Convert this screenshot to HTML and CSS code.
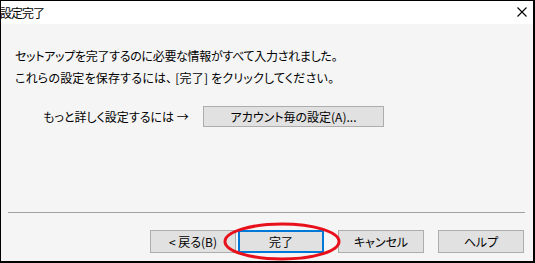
FILE: index.html
```html
<!DOCTYPE html>
<html lang="ja">
<head>
<meta charset="utf-8">
<link rel="stylesheet" href="styles.css">
</head>
<body>
<div class="window">
  <div class="titlebar">
    <span class="title">設定完了</span>
    <svg class="close" width="10" height="10" viewBox="0 0 10 10"><path d="M0.5 0.5 L9.5 9.5 M9.5 0.5 L0.5 9.5" stroke="#000" stroke-width="1.1" fill="none"/></svg>
  </div>
  <div class="body">
    <div class="content">
      <p class="line">セットアップを完了するのに必要な情報がすべて入力されました。</p>
      <p class="line line-wide">これらの設定を保存するには、 [完了] をクリックしてください。</p>
      <div class="detail-row">
        <span class="detail-label">もっと詳しく設定するには →</span>
        <button class="btn btn-wide">アカウント毎の設定(A)...</button>
      </div>
    </div>
    <hr class="sep">
    <div class="actions">
      <button class="btn">&lt; 戻る(B)</button>
      <button class="btn btn-default">完了</button>
      <button class="btn btn-gap">キャンセル</button>
      <button class="btn btn-gap">ヘルプ</button>
    </div>
  </div>
  <svg class="mark" width="118" height="40" viewBox="0 0 118 40"><ellipse cx="59" cy="19.5" rx="57" ry="17.5" fill="none" stroke="#e8101a" stroke-width="3"/></svg>
</div>
</body>
</html>
```

FILE: styles.css
```css
html, body {
  margin: 0;
  padding: 0;
}
body {
  font-family: "Noto Sans CJK JP", "Noto Sans", sans-serif;
  font-size: 12px;
  color: #000;
  font-feature-settings: "palt";
}
.window {
  position: relative;
  width: 535px;
  height: 263px;
  box-sizing: border-box;
  border-top: 1px solid #000;
  border-left: 1px solid #000;
  border-right: 2px solid #000;
  border-bottom: 2px solid #000;
  background: #f5f5f5;
  display: flex;
  flex-direction: column;
  overflow: hidden;
}
.titlebar {
  height: 23px;
  background: #fff;
  display: flex;
  align-items: center;
  justify-content: space-between;
  padding: 0 6px 0 0;
  flex: none;
}
.title {
  font-size: 12px;
  line-height: 23px;
  margin-left: -1px;
  letter-spacing: -1px;
}
.close {
  display: block;
  margin-top: -1px;
}
.body {
  flex: 1;
  display: flex;
  flex-direction: column;
}
.content {
  flex: 1;
  padding: 21px 14px 0 14px;
}
.line {
  margin: 0;
  line-height: 22px;
  height: 22px;
  letter-spacing: -0.3px;
}
.line-wide {
  letter-spacing: 0.2px;
}
.detail-row {
  display: flex;
  align-items: center;
  margin-top: 17px;
  padding-left: 28px;
}
.detail-label {
  width: 160px;
  flex: none;
}
.btn {
  font-family: inherit;
  font-size: 12px;
  font-feature-settings: "palt";
  background: #e1e1e1;
  border: 1px solid #adadad;
  border-radius: 0;
  color: #000;
  padding: 0;
  margin: 0;
  width: 86px;
  height: 23px;
  box-sizing: border-box;
  line-height: 20px;
}
.btn-wide {
  width: 181px;
  height: 21px;
  line-height: 18px;
}
.sep {
  margin: 0 8px 0 7px;
  border: 0;
  border-top: 1px solid #a0a0a0;
  height: 0;
}
.actions {
  display: flex;
  justify-content: flex-end;
  gap: 2px;
  padding: 17px 9px 8px 0;
}
.btn-default {
  border: 2px solid #0078d7;
}
.btn-gap {
  margin-left: 12px;
}
.mark {
  position: absolute;
  left: 222px;
  top: 221px;
}
```
